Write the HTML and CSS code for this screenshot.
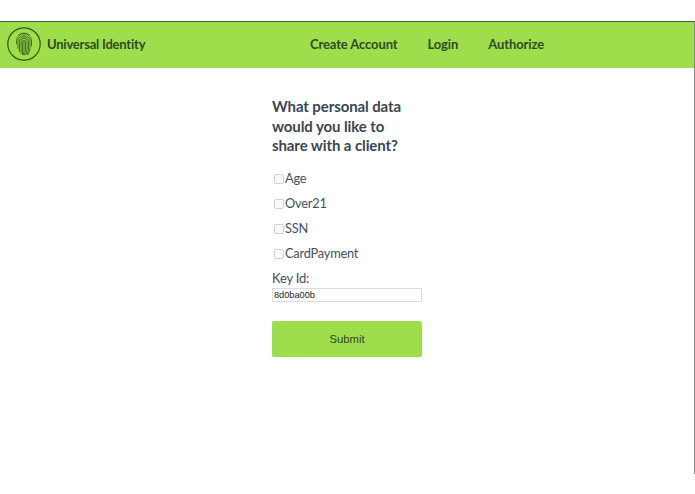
FILE: index.html
```html
<!DOCTYPE html>
<html lang="en">
<head>
<meta charset="utf-8">
<title>Universal Identity</title>
<link rel="stylesheet" href="styles.css">
</head>
<body>
<div class="frame">
  <header class="bar">
    <div class="brand">
      <span class="logo">
        <svg viewBox="0 0 34 34" width="34" height="34" fill="none" stroke="#2f5a17">
          <circle cx="17" cy="17" r="16.2" stroke-width="1.2"/>
          <g stroke-width="0.8" stroke-linecap="round">
            <path d="M12 7.800a8.500 8.500 0 0 1 10 0"/>
            <path d="M9.500 17V14a7.500 7.500 0 0 1 15 0v5"/>
            <path d="M11 21.500V14.500a6 6 0 0 1 12 0V21c0 2.500-.8 4.500-2 6.500"/>
            <path d="M12.500 24.500V14.500a4.500 4.500 0 0 1 9 0V22c0 2-.5 3.500-1.300 5.200"/>
            <path d="M14 26.500V14.500a3 3 0 0 1 6 0V22c0 2-.5 4-1.300 5.800"/>
            <path d="M15.500 27.500V15a1.500 1.500 0 0 1 3 0V23c0 1.800-.5 3.500-1.200 5"/>
            <path d="M17 14.500V23c0 1.800-.2 3.200-.8 4.800"/>
          </g>
        </svg>
      </span>
      <span class="brand-name">Universal Identity</span>
    </div>
    <nav class="nav">
      <a class="nav-link" href="#">Create Account</a>
      <a class="nav-link" href="#">Login</a>
      <a class="nav-link" href="#">Authorize</a>
    </nav>
  </header>
  <main class="content">
    <form class="card">
      <h1 class="title">What personal data would you like to share with a client?</h1>
      <label class="check"><input type="checkbox" class="box"><span>Age</span></label>
      <label class="check"><input type="checkbox" class="box"><span>Over21</span></label>
      <label class="check"><input type="checkbox" class="box"><span>SSN</span></label>
      <label class="check"><input type="checkbox" class="box"><span>CardPayment</span></label>
      <label class="key-label" for="key">Key Id:</label>
      <input id="key" class="key-input" type="text" value="8d0ba00b">
      <button class="submit" type="button">Submit</button>
    </form>
  </main>
</div>
</body>
</html>
```
FILE: styles.css
```css
* { box-sizing: border-box; }
html, body { margin: 0; padding: 0; background: #fff; }
body { width: 695px; height: 494px; overflow: hidden; font-family: Lato, "Liberation Sans", sans-serif; color: #3a4653; }
.frame { margin-top: 21px; height: 453px; border-top: 1px solid #4a5a40; border-right: 1px solid #8a8a8a; }
.bar { height: 46px; background: #9ede4d; display: flex; align-items: center; padding: 0 0 2px 7px; }
.brand { display: flex; align-items: center; gap: 6px; width: 303px; flex: none; }
.logo { display: block; width: 34px; height: 34px; }
.logo svg { display: block; }
.brand-name { font-size: 13px; font-weight: 700; color: #2f4a22; letter-spacing: -.22px; }
.nav { display: flex; gap: 30px; }
.nav-link { font-size: 13px; font-weight: 700; color: #2f4a22; text-decoration: none; letter-spacing: -.12px; }
.content { display: flex; justify-content: center; }
.card { width: 150px; margin-top: 29px; display: flex; flex-direction: column; }
.title { margin: 0 0 9.500px; font-size: 15px; font-weight: 700; line-height: 19.700px; letter-spacing: -.1px; color: #3a4653; }
.check { display: flex; align-items: center; height: 25px; font-size: 12.800px; letter-spacing: -.22px; color: #44505c; }
.box { appearance: none; width: 10px; height: 10px; margin: 1px 1px 0 2px; border: 1px solid #d2d2d2; border-radius: 2px; background: #fafafa; }
.key-label { font-size: 13px; letter-spacing: -.2px; color: #44505c; height: 18px; line-height: 18px; margin: 3px 0 1px; }
.key-input { width: 150px; height: 14px; padding: 0 1px; border: 1px solid #dcdcdc; font-family: "Liberation Sans", sans-serif; font-size: 9.200px; color: #222; background: #fff; outline: none; }
.submit { margin-top: 19px; width: 150px; height: 36px; border: 0; border-radius: 2px; background: #9ede4d; color: #2f4a1c; font-family: "Liberation Sans", sans-serif; font-size: 11.300px; }
```
